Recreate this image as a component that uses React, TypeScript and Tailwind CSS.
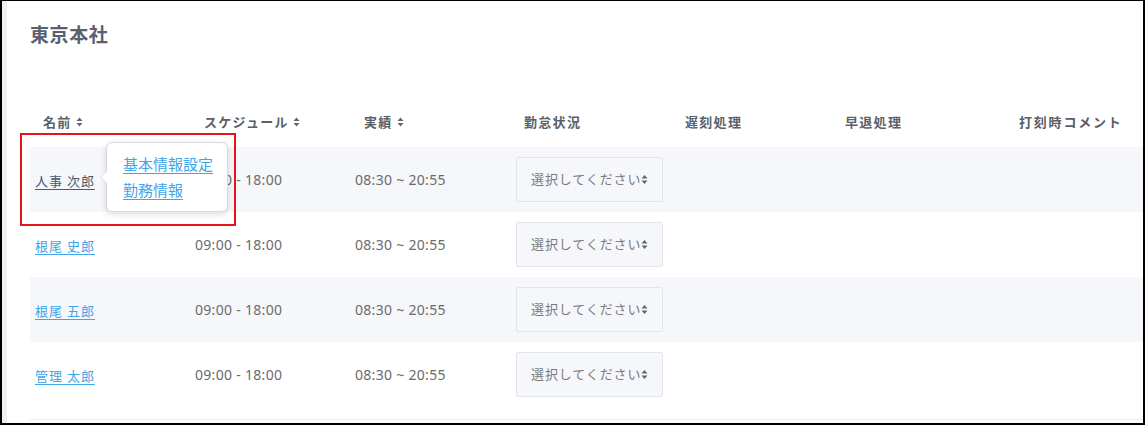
import React from "react";

const font = { fontFamily: '"Noto Sans", "Noto Sans CJK JP", sans-serif' };

function SortIcon() {
  return (
    <svg width="7" height="10" viewBox="0 0 7 10" className="ml-[4px] inline-block">
      <path d="M3.5 0.5 L6.5 4 L0.5 4 Z" fill="#5f6673" />
      <path d="M3.5 9.5 L6.5 6 L0.5 6 Z" fill="#5f6673" />
    </svg>
  );
}

function SelectBox() {
  return (
    <div className="ml-[6px] flex h-[45px] w-[147px] items-center rounded-[2px] border border-[#e2e5ea] bg-[#f6f7fa] pl-[14px]">
      <span className="text-[13px] tracking-[0.9px] text-[#7a7a7a]">選択してください</span>
      <svg width="7" height="11" viewBox="0 0 7 11" className="ml-[0px]">
        <path d="M3.5 1 L6.5 4.6 L0.5 4.6 Z" fill="#5f6673" />
        <path d="M3.5 10 L6.5 6.4 L0.5 6.4 Z" fill="#5f6673" />
      </svg>
    </div>
  );
}

const rows = [
  { name: "人事 次郎", hover: true, bg: true },
  { name: "根尾 史郎", hover: false, bg: false },
  { name: "根尾 五郎", hover: false, bg: true },
  { name: "管理 太郎", hover: false, bg: false },
];

export default function App() {
  return (
    <div
      className="h-[425px] w-[1145px] overflow-hidden bg-black pb-[2px] pl-[2px] pr-[2px] pt-px"
      style={font}
    >
      <div className="relative flex h-full bg-white">
        <div className="w-[5px] bg-[#eef0f4]" />
        <div className="flex-1 pl-[23px]">
          <div className="mt-[19px] h-[30px] text-[19px] font-semibold leading-[30px] tracking-[0.6px] text-[#596170]">
            東京本社
          </div>
          <div className="mt-[62px] grid h-[20px] grid-cols-[160px_160px_160px_160px_160px_160px_1fr] items-center text-[13px] font-bold leading-[20px] tracking-[1.3px] text-[#5a5f68]">
            <div className="flex items-center pl-[13px]">
              名前
              <SortIcon />
            </div>
            <div className="flex items-center pl-[14px]">
              スケジュール
              <SortIcon />
            </div>
            <div className="flex items-center pl-[14px]">
              実績
              <SortIcon />
            </div>
            <div className="pl-[14px]">勤怠状況</div>
            <div className="pl-[15px]">遅刻処理</div>
            <div className="pl-[15px]">早退処理</div>
            <div className="pl-[29px] tracking-[1.8px]">打刻時コメント</div>
          </div>
          <div className="mt-[15px]">
            {rows.map((r, i) => (
              <div
                key={i}
                className={`grid h-[65px] grid-cols-[160px_160px_160px_160px_160px_160px_1fr] items-center ${
                  r.bg ? "bg-[#f6f7fa]" : "bg-white"
                }`}
              >
                <div className="relative pl-[5px]">
                  <span
                    className={`text-[13px] tracking-[0.9px] underline underline-offset-[3px] ${
                      r.hover ? "text-[#4b5a6e]" : "text-[#3fa4e8]"
                    }`}
                  >
                    {r.name}
                  </span>
                  {r.hover && (
                    <div className="absolute left-[76px] top-[-26px] z-10 flex h-[70px] w-[122px] flex-col justify-center rounded-[6px] border border-[#d7d9dd] bg-white pl-[16px] shadow-[0_2px_6px_rgba(0,0,0,0.15)]">
                      <div className="absolute left-[-7px] top-[27px] h-0 w-0 border-y-[7px] border-r-[7px] border-y-transparent border-r-[#d7d9dd]" />
                      <div className="absolute left-[-6px] top-[28px] h-0 w-0 border-y-[6px] border-r-[6px] border-y-transparent border-r-white" />
                      <span className="text-[15px] leading-[26px] text-[#3fa4e8] underline underline-offset-[3px]">
                        基本情報設定
                      </span>
                      <span className="text-[15px] leading-[26px] text-[#3fa4e8] underline underline-offset-[3px]">
                        勤務情報
                      </span>
                    </div>
                  )}
                </div>
                <div className="pl-[5px] text-[14px] tracking-[0.3px] text-[#6b6b6b]">09:00 - 18:00</div>
                <div className="pl-[5px] text-[14px] tracking-[0.3px] text-[#6b6b6b]">08:30 ~ 20:55</div>
                <div>
                  <SelectBox />
                </div>
                <div />
                <div />
                <div />
              </div>
            ))}
          </div>
          <div className="mt-[12px] h-px bg-[#eceef1]" />
        </div>
        <div className="pointer-events-none absolute left-[18px] top-[132px] z-20 h-[93px] w-[216px] border-2 border-[#e8141b]" />
      </div>
    </div>
  );
}
